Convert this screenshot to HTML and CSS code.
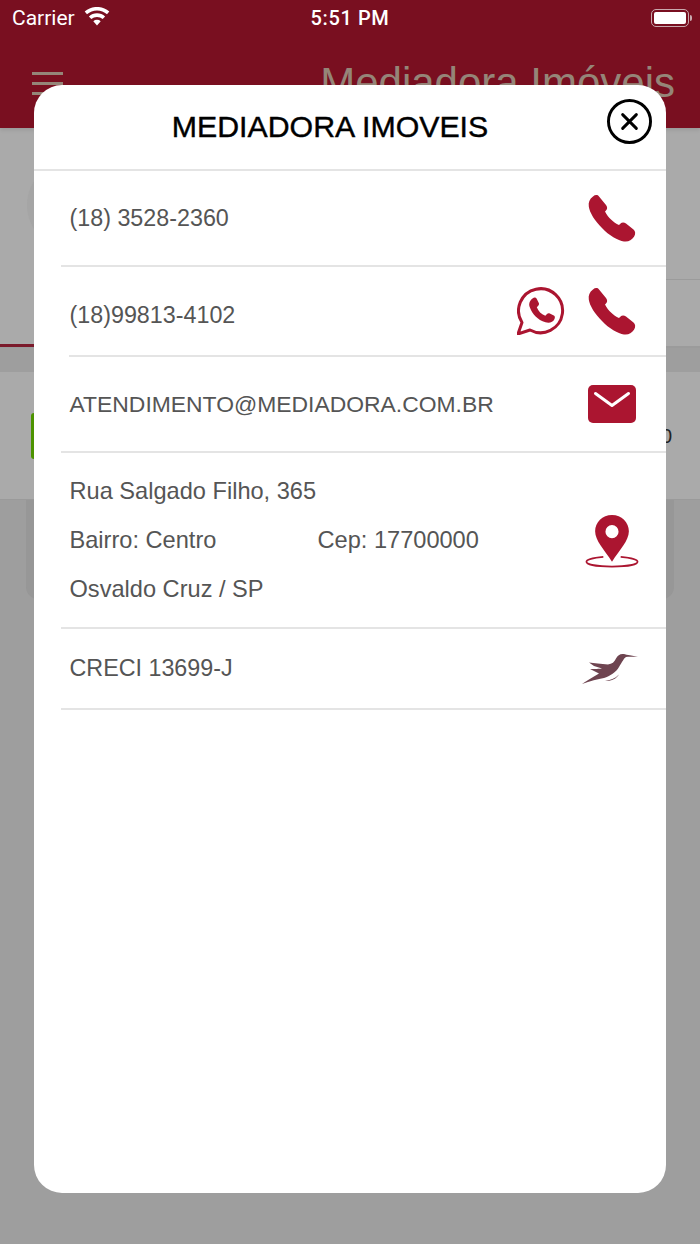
FILE: index.html
```html
<!doctype html>
<html>
<head>
    <meta charset="utf-8">
    <title>Mediadora Imóveis</title>
    <meta name="viewport" content="width=device-width, initial-scale=1">
    <link rel="stylesheet" href="styles.css">
</head>
<body>
<div class="page">
    <header class="topbar">
        <div class="status">
            <div class="status-left">
                <span>Carrier</span>
                <svg class="wifi" width="26" height="19" viewBox="0 0 26 19"><path d="M13 18.500 L9.300 14.300 A5.500 5.500 0 0 1 16.700 14.300 Z M7.300 12.100 L4.900 9.400 A12 12 0 0 1 21.100 9.400 L18.700 12.100 A8.500 8.500 0 0 0 7.300 12.100 Z M3 7.200 L.7 4.600 A18.500 18.500 0 0 1 25.300 4.600 L23 7.200 A15 15 0 0 0 3 7.200 Z" fill="#fff"/></svg>
            </div>
            <span class="clock">5:51 PM</span>
            <div class="battery"><i></i><b></b></div>
        </div>
        <div class="nav">
            <div class="burger"><i></i><i></i><i></i></div>
            <div class="nav-title">Mediadora Imóveis</div>
        </div>
    </header>

    <!-- page behind the modal -->
    <div class="behind">
        <div class="behind-top">
            <div class="avatar"></div>
            <div class="tab-line"></div>
            <div class="side-line"></div>
        </div>
        <div class="behind-card">
            <div class="green-tag"></div>
            <span class="behind-num">0</span>
        </div>
        <div class="behind-lower"><div class="lower-card"></div></div>
    </div>

    <div class="modal">
        <div class="modal-head">
            <h1>MEDIADORA IMOVEIS</h1>
            <svg class="close" width="45" height="45" viewBox="0 0 46 46"><circle cx="23" cy="23" r="21.500" fill="none" stroke="#000" stroke-width="3"/><path d="M16 16 L30 30 M30 16 L16 30" stroke="#000" stroke-width="3" stroke-linecap="round"/></svg>
        </div>

        <div class="row row-a">
            <span>(18) 3528-2360</span>
            <div class="icons">
                <svg class="ico" width="48" height="48" viewBox="0 0 48 48"><use href="#phone"/></svg>
            </div>
        </div>
        <div class="row row-b">
            <span class="phone-text">(18)99813-4102</span>
            <div class="icons">
                <svg class="ico" width="48" height="48" viewBox="0 0 48 48"><path d="M1 47 L5 35.500 A22 22 0 1 1 13 43 Z" fill="none" stroke="#ab1530" stroke-width="3" stroke-linejoin="round"/><path d="M15.500 11.500 C17.500 10 19 10.500 19.800 12 L21.800 16 C22.300 17 22 18 21 19 L19.800 20.300 C21.500 24.500 24 27 28.300 28.800 L30 27 C30.800 26.200 31.700 26 32.800 26.500 L36.800 28.600 C38 29.300 38.200 30.500 37.500 32 C36 35.500 32 36.500 28.500 35.300 C20.500 32.800 15.500 27.500 12.700 20 C11.500 16.800 12.800 13.500 15.500 11.500 Z" fill="#ab1530"/></svg>
                <svg class="ico" width="48" height="48" viewBox="0 0 48 48"><use href="#phone"/></svg>
            </div>
        </div>
        <div class="row row-c">
            <span>ATENDIMENTO@MEDIADORA.COM.BR</span>
            <div class="icons">
                <svg class="ico" width="48" height="38" viewBox="0 0 48 38"><rect width="48" height="38" rx="5" fill="#ab1530"/><path d="M7.500 8.500 L24 20.500 L40.500 8.500" fill="none" stroke="#fff" stroke-width="3" stroke-linecap="round" stroke-linejoin="round"/></svg>
            </div>
        </div>
        <div class="row row-d">
            <div class="address">
                <p>Rua Salgado Filho, 365</p>
                <p class="addr-cols"><span>Bairro: Centro</span><span>Cep: 17700000</span></p>
                <p>Osvaldo Cruz / SP</p>
            </div>
            <div class="icons">
                <svg class="ico-pin" width="54" height="54" viewBox="0 0 56 56"><path d="M19 44.500 C8 45.500 1.500 47.500 1.500 49.500 C1.500 52.500 13 54.500 28 54.500 C43 54.500 54.500 52.500 54.500 49.500 C54.500 47.500 48 45.500 37 44.500" fill="none" stroke="#ab1530" stroke-width="1.800"/><path fill-rule="evenodd" d="M28 1 C38 1 45.500 8.500 45.500 18 C45.500 28 36 37 28 49.500 C20 37 10.500 28 10.500 18 C10.500 8.500 18 1 28 1 Z M28 11.500 A6.800 6.800 0 1 0 28 25.100 A6.800 6.800 0 1 0 28 11.500 Z" fill="#ab1530"/></svg>
            </div>
        </div>
        <div class="row row-e">
            <span>CRECI 13699-J</span>
            <div class="icons">
                <svg class="ico-bird" width="58" height="34" viewBox="0 0 58 34"><path d="M57 5 C51 3.500 46 3 43 2 C39 1.500 37 3 35 6.500 C33.500 10 31 12 27 12.500 C20 12 13 11 8 10.500 L13 14 L21 16.500 C16 17 11 17 9 17 L16 20.500 L18 21.500 C11 25.500 5 29 1 32 C9 29 17 27 23 26 C29 24 35 20.500 38 15 C41 10.500 42.500 6.500 45 5 C49 4.500 53 5 57 5 Z" fill="#6e4450"/><path d="M24 29 C29 28.500 34 26.500 38 22.500 C35 27 30 29.500 24 29 Z" fill="#6e4450"/></svg>
            </div>
        </div>
    </div>
</div>

<svg width="0" height="0" class="defs">
    <symbol id="phone" viewBox="0 0 48 48"><path d="M5 2.500 C7 .8 9.500 .5 11 2.500 L18 11 C19.500 13 19.500 15 18 16.500 L17 17.500 C18.500 20.500 20.800 23.500 23.300 25.800 C25.500 28 28 29.800 31 31 L32.300 29.700 C34 28 36 28 38 29.500 L45.500 35.500 C47.500 37.500 47.800 40 46 42.800 C43.500 46.500 40.500 48 36 47.500 C30 46.500 21 41.500 14 34 C7 27 1.500 18.500 .8 12.500 C.2 8.500 1.500 5 5 2.500 Z" fill="#ab1530"/></symbol>
</svg>
</body>
</html>
```
FILE: styles.css
```css
* {
    box-sizing: border-box;
}

html, body {
    margin: 0;
    height: 100%;
}

body {
    font-family: "Liberation Sans", Arial, sans-serif;
}

.page {
    position: relative;
    width: 700px;
    height: 1244px;
    overflow: hidden;
    background: #9e9e9e;
    display: flex;
    flex-direction: column;
}

.defs {
    position: absolute;
}

/* top bar */
.topbar {
    height: 128px;
    flex: none;
    background: #790f20;
    box-shadow: 0 2px 4px rgba(0, 0, 0, .1);
    z-index: 1;
}

.status {
    height: 37px;
    padding: 0 8px 0 12px;
    display: flex;
    align-items: center;
    justify-content: space-between;
    color: #fff;
    font-size: 20px;
    font-family: Roboto, "Liberation Sans", sans-serif;
}

.status-left {
    display: flex;
    align-items: center;
    gap: 9px;
    width: 200px;
    margin-top: -1px;
    font-size: 21px;
}

.wifi {
    margin-top: -4px;
}

.clock {
    font-weight: 500;
    letter-spacing: .6px;
    margin-top: -1px;
    margin-left: -4px;
}

.battery {
    width: 200px;
    height: 0;
    display: flex;
    align-items: center;
    justify-content: flex-end;
}

.battery i {
    display: block;
    width: 38px;
    height: 18px;
    margin-top: -1px;
    border: 1px solid #c9a9ae;
    border-radius: 5px;
    background: #fff;
    background-clip: content-box;
    padding: 2px;
}

.battery b {
    display: block;
    width: 2px;
    height: 6px;
    margin-left: 1px;
    margin-top: -1px;
    border-radius: 0 2px 2px 0;
    background: #c9a9ae;
}

.nav {
    display: flex;
    justify-content: space-between;
    padding: 21px 25px 0 32px;
}

.burger {
    width: 31px;
    margin-top: 14px;
    display: flex;
    flex-direction: column;
    gap: 7px;
}

.burger i {
    display: block;
    height: 3px;
    background: #958578;
}

.nav-title {
    font-size: 42px;
    line-height: 50px;
    color: #958578;
}

/* dimmed page */
.behind {
    flex: 1;
    display: flex;
    flex-direction: column;
}

.behind-top {
    height: 220px;
    background: #aaa;
    border-bottom: 2px solid #9b9b9b;
    padding-top: 32px;
    position: relative;
}

.avatar {
    width: 90px;
    height: 90px;
    margin-left: 27px;
    border-radius: 50%;
    background: #a5a5a5;
}

.tab-line {
    position: absolute;
    left: 0;
    bottom: -1px;
    width: 34px;
    height: 3px;
    background: #7b1a2b;
}

.side-line {
    position: absolute;
    right: 0;
    top: 151px;
    width: 34px;
    height: 1px;
    background: #9b9b9b;
}

.behind-card {
    margin-top: 24px;
    height: 128px;
    background: #aaa;
    padding: 41px 28px 0 31px;
    display: flex;
    justify-content: space-between;
    border-bottom: 1px solid #9a9a9a;
}

.green-tag {
    width: 8px;
    height: 46px;
    border-radius: 3px 0 0 3px;
    background: #4c9300;
}

.behind-num {
    font-size: 20px;
    line-height: 46px;
    color: #222;
}

.behind-lower {
    padding: 0 26px;
}

.lower-card {
    height: 99px;
    background: #979797;
    border-radius: 0 0 12px 12px;
}

/* modal */
.modal {
    position: absolute;
    z-index: 2;
    left: 34px;
    top: 85px;
    width: 632px;
    height: 1108px;
    background: #fff;
    border-radius: 28px;
}

.modal-head {
    position: relative;
    height: 86px;
    border-bottom: 2px solid #e4e4e4;
    padding-top: 25px;
    text-align: center;
}

.modal-head h1 {
    margin: 0;
    font-size: 30.300px;
    line-height: 34px;
    font-weight: 400;
    color: #000;
    -webkit-text-stroke: .4px #000;
    padding-right: 40px;
}

.close {
    position: absolute;
    top: 14px;
    right: 14px;
}

.row {
    display: flex;
    align-items: center;
    justify-content: space-between;
    margin-left: 27px;
    padding-left: 8.500px;
    padding-right: 30px;
    border-bottom: 2px solid #e4e4e4;
    color: #555;
    font-size: 23.300px;
}

.icons {
    display: flex;
    align-items: center;
    gap: 23px;
}

.row-a {
    height: 96px;
}

.row-b {
    height: 90px;
    margin-left: 35px;
    padding-left: .500px;
}

.phone-text {
    margin-top: 8px;
}

.row-c {
    height: 96px;
    font-size: 22.900px;
}

.row-d {
    height: 176px;
    font-size: 23.600px;
}

.row-e {
    height: 81px;
}

.address p {
    margin: 0 0 23px;
    line-height: 26px;
}

.address p:last-child {
    margin-bottom: 0;
}

.addr-cols {
    display: flex;
}

.addr-cols span:first-child {
    width: 248px;
}

.ico-pin {
    margin-right: -3px;
    margin-top: 1px;
}

.ico-bird {
    margin-right: -3px;
}
```
